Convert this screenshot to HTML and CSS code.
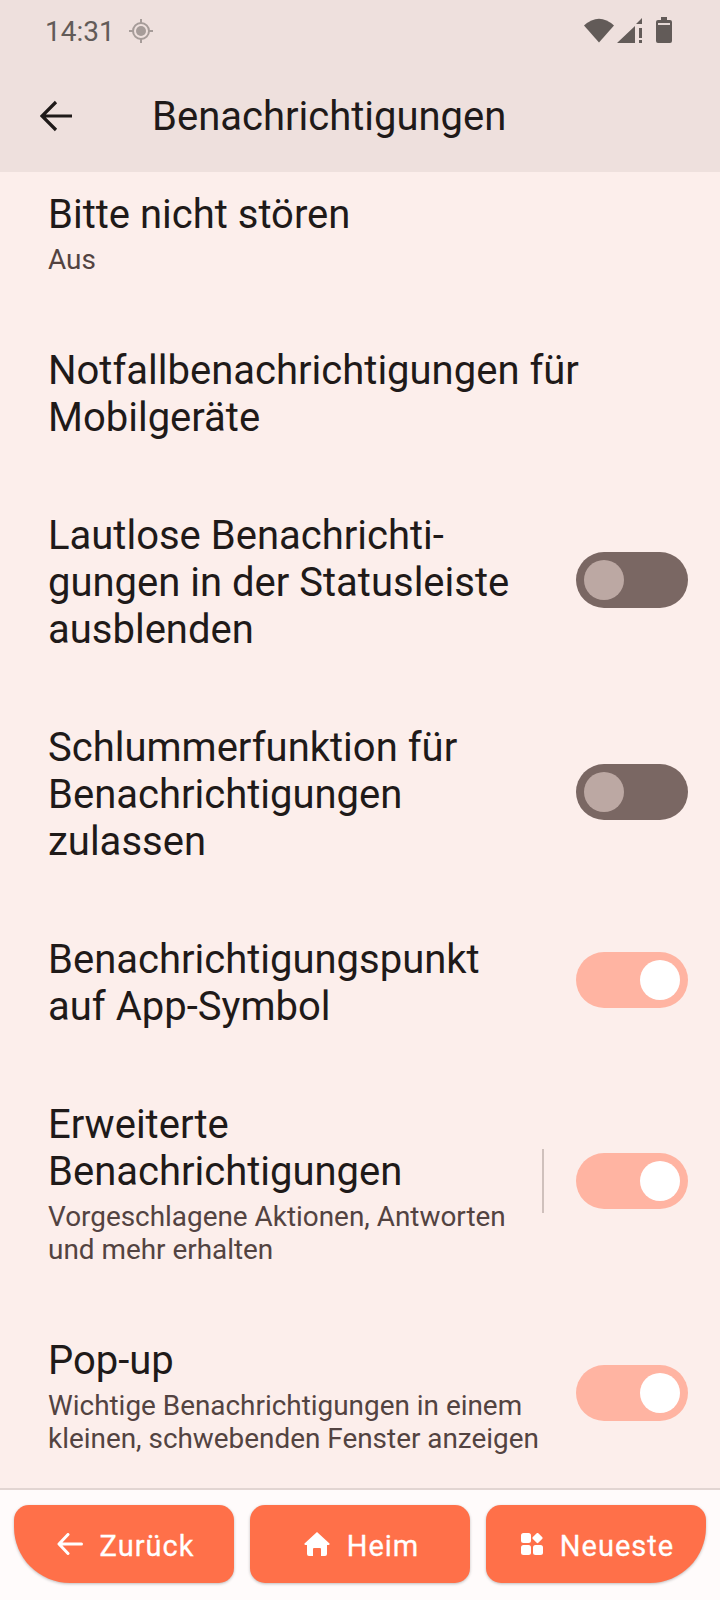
FILE: index.html
```html
<!DOCTYPE html>
<html lang="de">
<head>
    <meta charset="UTF-8">
    <meta name="viewport" content="width=device-width, initial-scale=1.0">
    <title>Benachrichtigungen</title>
    <link rel="stylesheet" href="styles.css">
</head>
<body>

<div class="screen">
    <header class="topbar">
        <div class="statusbar">
            <div class="status-left">
                <span class="clock">14:31</span>
                <svg class="locate" width="24" height="24" viewBox="0 0 24 24">
                    <circle cx="12" cy="12" r="8" fill="none" stroke="#a69c99" stroke-width="2"/>
                    <circle cx="12" cy="12" r="5" fill="#a69c99"/>
                    <path d="M12 0v4M12 20v4M0 12h4M20 12h4" stroke="#a69c99" stroke-width="2"/>
                </svg>
            </div>
            <div class="status-right">
                <svg width="30" height="26" viewBox="0 0 30 26">
                    <path d="M0 8.500Q15 -5 30 8.500L15 25.500Z" fill="#625b58"/>
                </svg>
                <svg width="26" height="26" viewBox="0 0 26 26">
                    <path d="M0 26L18 9V26ZM19 7L25 1V7Z" fill="#625b58"/>
                    <path d="M22 11h3v10h-3ZM22 23h3v3h-3Z" fill="#625b58"/>
                </svg>
                <svg width="16" height="26" viewBox="0 0 16 26">
                    <path d="M5 0h6v3h3a2 2 0 0 1 2 2v19a2 2 0 0 1-2 2H2a2 2 0 0 1-2-2V5a2 2 0 0 1 2-2h3Z" fill="#625b58"/>
                    <rect x="2" y="6" width="12" height="2" fill="#e4d8d5"/>
                </svg>
            </div>
        </div>
        <div class="appbar">
            <svg class="back" width="32" height="32" viewBox="0 0 32 32">
                <path d="M32 16H3M16 2L2 16l14 14" fill="none" stroke="#1f1a19" stroke-width="3.200"/>
            </svg>
            <h1>Benachrichtigungen</h1>
        </div>
    </header>

    <main class="list">
        <div class="row">
            <div class="row-text">
                <div class="row-title">Bitte nicht stören</div>
                <div class="row-sub">Aus</div>
            </div>
        </div>
        <div class="row">
            <div class="row-text">
                <div class="row-title">Notfallbenachrichtigungen für Mobilgeräte</div>
            </div>
        </div>
        <div class="row">
            <div class="row-text">
                <div class="row-title">Lautlose Benachrichti-<br>gungen in der Statusleiste ausblenden</div>
            </div>
            <div class="toggle"><span class="knob"></span></div>
        </div>
        <div class="row">
            <div class="row-text">
                <div class="row-title">Schlummerfunktion für Benachrichtigungen zulassen</div>
            </div>
            <div class="toggle"><span class="knob"></span></div>
        </div>
        <div class="row">
            <div class="row-text">
                <div class="row-title">Benachrichtigungspunkt auf App-Symbol</div>
            </div>
            <div class="toggle on"><span class="knob"></span></div>
        </div>
        <div class="row">
            <div class="row-text">
                <div class="row-title">Erweiterte Benachrichtigungen</div>
                <div class="row-sub">Vorgeschlagene Aktionen, Antworten und mehr erhalten</div>
            </div>
            <div class="divider"></div>
            <div class="toggle on"><span class="knob"></span></div>
        </div>
        <div class="row">
            <div class="row-text">
                <div class="row-title">Pop-up</div>
                <div class="row-sub">Wichtige Benachrichtigungen in einem kleinen, schwebenden Fenster anzeigen</div>
            </div>
            <div class="toggle on"><span class="knob"></span></div>
        </div>
    </main>

    <footer class="navbar">
        <button class="nav-btn first">
            <svg width="26" height="22" viewBox="0 0 26 22">
                <path d="M24.500 11H3M11 1.500L2 11l9 9.500" fill="none" stroke="#fff" stroke-width="3" stroke-linecap="round" stroke-linejoin="round"/>
            </svg>
            <span class="nav-label">Zurück</span>
        </button>
        <button class="nav-btn">
            <svg width="26" height="24" viewBox="0 0 26 24">
                <path d="M13 0L25.500 11.500a1 1 0 0 1-1 1.500H23V22a2 2 0 0 1-2 2h-4v-7a1 1 0 0 0-1-1h-6a1 1 0 0 0-1 1v7H5a2 2 0 0 1-2-2V13H1.500a1 1 0 0 1-1-1.500Z" fill="#fff"/>
            </svg>
            <span class="nav-label">Heim</span>
        </button>
        <button class="nav-btn last">
            <svg width="22" height="22" viewBox="0 0 22 22">
                <rect x="0" y="0" width="10" height="10" rx="2.500" fill="#fff"/>
                <rect x="12.500" y="1" width="8" height="8" rx="1.500" transform="rotate(45 16.500 5)" fill="#fff"/>
                <rect x="0" y="12" width="10" height="10" rx="2.500" fill="#fff"/>
                <rect x="12" y="12" width="10" height="10" rx="2.500" fill="#fff"/>
            </svg>
            <span class="nav-label">Neueste</span>
        </button>
    </footer>
</div>

</body>
</html>
```

FILE: styles.css
```css
html, body {
    margin: 0;
    padding: 0;
}
body {
    font-family: Roboto, "Noto Sans", sans-serif;
    background-color: #fceeeb;
}
.screen {
    width: 720px;
    height: 1600px;
    display: flex;
    flex-direction: column;
    overflow: hidden;
}
.topbar {
    height: 172px;
    flex: none;
    background-color: #eee0dd;
}
.statusbar {
    height: 62px;
    padding: 0 48px 0 45px;
    display: flex;
    align-items: center;
    justify-content: space-between;
}
.status-left {
    display: flex;
    align-items: center;
    gap: 14px;
}
.clock {
    font-size: 28px;
    color: #625b58;
}
.status-right {
    display: flex;
    align-items: center;
    gap: 3px;
    margin-top: -2px;
}
.status-right svg:last-child {
    margin-left: 10px;
}
.appbar {
    height: 108px;
    display: flex;
    align-items: center;
    padding-left: 40px;
}
.appbar h1 {
    margin: 0 0 0 80px;
    font-size: 40px;
    font-weight: 400;
    color: #1f1a19;
}
.list {
    flex: 1;
    overflow: hidden;
    padding-top: 13px;
}
.row {
    display: flex;
    align-items: center;
    padding: 0 32px 65px 48px;
}
.row-text {
    flex: 1;
    min-width: 0;
    padding-top: 6px;
}
.row-title {
    font-size: 40px;
    line-height: 47px;
    color: #1f1a19;
}
.row-sub {
    margin-top: 5px;
    font-size: 27.900px;
    line-height: 33px;
    color: #534341;
}
.toggle {
    width: 112px;
    height: 56px;
    flex: none;
    margin-left: 32px;
    padding: 8px;
    box-sizing: border-box;
    border-radius: 28px;
    background-color: #7a6763;
    display: flex;
}
.knob {
    width: 40px;
    height: 40px;
    border-radius: 50%;
    background-color: #bca8a3;
}
.toggle.on {
    background-color: #ffb4a2;
    justify-content: flex-end;
}
.toggle.on .knob {
    background-color: #fff;
}
.divider {
    width: 2px;
    height: 64px;
    flex: none;
    margin-left: 22px;
    background-color: #cfc0bc;
}
.navbar {
    height: 112px;
    flex: none;
    box-sizing: border-box;
    border-top: 2px solid #e2d5d2;
    background-color: #fffbfb;
    padding: 15px 14px 17px;
    display: flex;
    gap: 16px;
}
.nav-btn {
    flex: 1;
    border: none;
    border-radius: 15px;
    background-color: #ff7049;
    color: #fff;
    font-family: Roboto, sans-serif;
    font-size: 29px;
    font-weight: 400;
    letter-spacing: 1px;
    display: flex;
    align-items: center;
    justify-content: center;
    gap: 17px;
    padding: 0 0 0 3px;
    box-shadow: 0 1px 3px rgba(0, 0, 0, 0.25);
}
.nav-label {
    padding-top: 4px;
    -webkit-text-stroke: 0.3px #fff;
}
.nav-btn.first {
    border-bottom-left-radius: 56px;
}
.nav-btn.last {
    border-bottom-right-radius: 56px;
}
```
